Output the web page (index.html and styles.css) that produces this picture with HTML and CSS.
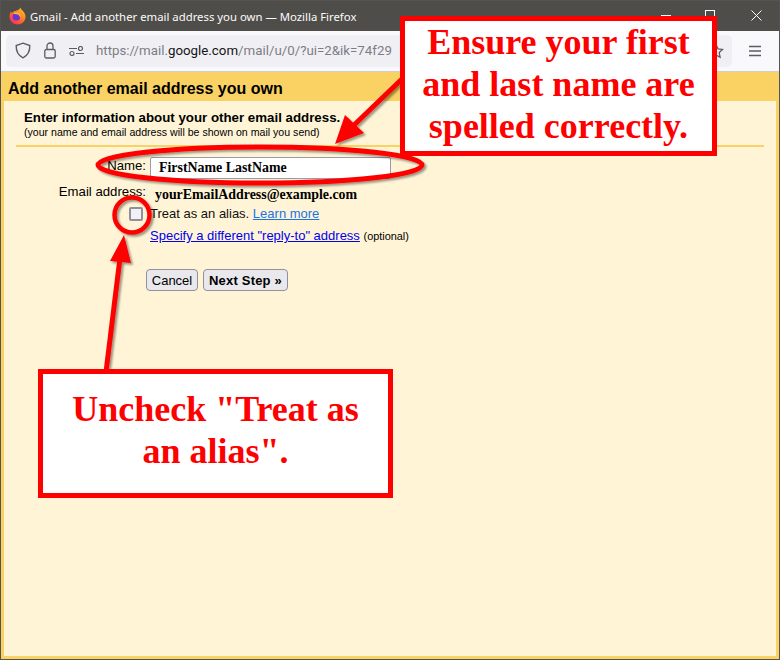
FILE: index.html
```html
<!DOCTYPE html>
<html lang="en">
<head>
<meta charset="utf-8">
<title>Gmail - Add another email address you own</title>
<link rel="stylesheet" href="styles.css">
</head>
<body>
<div class="window">
  <header class="titlebar">
    <svg class="fx" width="17" height="18" viewBox="0 0 17 18"><defs><linearGradient id="g" x1=".9" y1=".1" x2=".2" y2="1"><stop offset="0" stop-color="#ffc21f"/><stop offset=".55" stop-color="#ff6a2b"/><stop offset="1" stop-color="#f0286e"/></linearGradient></defs><path d="M11.500.5c.3 1.800 1.600 2.600 3 4.200 1.500 1.700 2.100 3.700 2 5.300-.2 4.300-3.600 7.500-8 7.500-4.500 0-8-3.500-8-8 0-1.800.5-3.600 1.500-5l.8 1.600c.7-1 1.900-1.800 3.200-2.100 2.200-.5 4.500-1 5.500-3.500z" fill="url(#g)"/><circle cx="7.500" cy="9.500" r="3.900" fill="#6a34cf"/><path d="M4 6.500c1.800-1.500 5-1.700 6.700.1 1.400 1.500 1.500 3.800.4 5.400.3-2.300-1-4.300-3.300-4.700-1.400-.3-2.800-.2-3.800-.8z" fill="#ffb52a"/></svg>
    <span class="wintitle">Gmail - Add another email address you own — Mozilla Firefox</span>
    <div class="winbtns">
      <span class="wmin"></span>
      <span class="wmax"></span>
      <svg width="11" height="11" viewBox="0 0 11 11"><path d="M.5.500l10 10M10.500.500l-10 10" stroke="#fff" fill="none"/></svg>
    </div>
  </header>
  <nav class="toolbar">
    <div class="urlbar">
      <svg width="16" height="17" viewBox="0 0 16 17"><path d="M8 1.200l6.800 2.300c.2 5.500-1.800 9.800-6.800 12.300C3 13.300 1 9 1.200 3.500z" fill="none" stroke="#5b5b66" stroke-width="1.400"/></svg>
      <svg width="12" height="17" viewBox="0 0 12 17"><rect x=".8" y="7.500" width="10.400" height="8.500" rx="1.500" fill="none" stroke="#5b5b66" stroke-width="1.300"/><path d="M3 7.500V4a3 3 0 0 1 6 0v3.500" fill="none" stroke="#5b5b66" stroke-width="1.300"/></svg>
      <svg width="15" height="10" viewBox="0 0 15 10"><path d="M0 2.500h8M7 7.500h8" stroke="#5b5b66" stroke-width="1.200"/><circle cx="11.500" cy="2.500" r="2" fill="none" stroke="#5b5b66" stroke-width="1.200"/><circle cx="3" cy="7.500" r="2" fill="none" stroke="#5b5b66" stroke-width="1.200"/></svg>
      <span class="url">https://mail.<b>google.com</b>/mail/u/0/?ui=2&amp;ik=74f29</span>
      <svg class="star" width="16" height="16" viewBox="0 0 16 16"><path d="M8 1.500l2 4.300 4.600.6-3.400 3.200.9 4.700L8 12l-4.100 2.300.9-4.700L1.400 6.400 6 5.800z" fill="none" stroke="#5b5b66" stroke-width="1.300"/></svg>
    </div>
    <svg class="menu" width="14" height="12" viewBox="0 0 14 12"><path d="M1 1.500h12M1 6h12M1 10.500h12" stroke="#5b5b66" stroke-width="1.300"/></svg>
  </nav>
  <main class="dialog">
    <h1 class="dialog-title">Add another email address you own</h1>
    <section class="panel">
      <div class="intro">
        <div class="intro-head">Enter information about your other email address.</div>
        <div class="intro-sub">(your name and email address will be shown on mail you send)</div>
      </div>
      <form class="form">
        <div class="row row-name">
          <label class="lbl">Name:</label>
          <div class="name-input">FirstName LastName</div>
        </div>
        <div class="row row-email">
          <span class="lbl">Email address:</span>
          <span class="email">yourEmailAddress@example.com</span>
        </div>
        <div class="row row-alias">
          <span class="lbl check-cell"><span class="checkbox"></span></span>
          <span class="alias">Treat as an alias. <a class="learn" href="#">Learn more</a></span>
        </div>
        <div class="row row-reply">
          <span class="lbl"></span>
          <span class="reply"><a href="#">Specify a different "reply-to" address</a> <small>(optional)</small></span>
        </div>
        <div class="actions">
          <button type="button" class="btn">Cancel</button>
          <button type="button" class="btn btn-next">Next Step »</button>
        </div>
      </form>
    </section>
  </main>

  <svg class="marks" width="780" height="660" viewBox="0 0 780 660">
    <defs><filter id="s" x="-10%" y="-10%" width="120%" height="120%"><feDropShadow dx="2" dy="2" stdDeviation="1.200" flood-color="#000" flood-opacity=".4"/></filter></defs>
    <g filter="url(#s)">
      <path d="M403 78L352 127" stroke="#f00" stroke-width="5" fill="none"/>
      <path d="M335 144L345 115L364 133z" fill="#f00"/>
      <ellipse cx="260" cy="165" rx="162" ry="18" fill="none" stroke="#f00" stroke-width="5"/>
      <circle cx="132" cy="215" r="17.500" fill="none" stroke="#f00" stroke-width="4.500"/>
      <path d="M106 372L120 258" stroke="#f00" stroke-width="5" fill="none"/>
      <path d="M124 235L110 261L131 263z" fill="#f00"/>
    </g>
  </svg>
  <aside class="callout callout-a">Ensure your first and last name are spelled correctly.</aside>
  <aside class="callout callout-b">Uncheck "Treat as an alias".</aside>
</div>
</body>
</html>
```
FILE: styles.css
```css
* { box-sizing: border-box; }
html, body { margin: 0; padding: 0; }
body { width: 780px; height: 660px; overflow: hidden; background: #4f4d49; font-family: "Liberation Sans", Arial, sans-serif; }
.window { position: relative; width: 780px; height: 660px; padding: 1px; display: flex; flex-direction: column; background: #55534f; }
.titlebar { height: 30px; flex: none; background: #4f4d49; display: flex; align-items: center; padding-left: 8px; color: #fbfbfb; }
.fx { flex: none; margin-right: 4px; margin-top: -1px; }
.wintitle { white-space: nowrap; font-family: "Noto Sans", "Open Sans", sans-serif; font-size: 11.350px; }
.winbtns { margin-left: auto; display: flex; align-items: center; gap: 35px; padding-right: 17px; margin-top: -2px; }
.wmin { width: 10px; height: 1px; background: #fff; }
.wmax { width: 10px; height: 10px; border: 1px solid #fff; margin-left: -1px; margin-right: 1px; }
.toolbar { height: 41px; flex: none; background: #f9f9fb; border-bottom: 1px solid #cfcfd3; display: flex; align-items: center; padding: 0 23px 1px 5px; gap: 16px; }
.urlbar { width: 726px; height: 32px; flex: none; background: #f0f0f4; border-radius: 5px; display: flex; align-items: center; padding: 0 8px 0 9px; }
.urlbar svg:nth-child(1) { margin-right: 13px; }
.urlbar svg:nth-child(2) { margin-right: 13px; }
.urlbar svg:nth-child(3) { margin-right: 12px; }
.url { font: 13.300px Roboto, "Noto Sans", sans-serif; color: #7d7d85; white-space: nowrap; }
.url b { font-weight: 400; color: #15141a; }
.star { margin-left: auto; }
.menu { flex: none; }
.dialog { flex: 1; display: flex; flex-direction: column; background: #fad163; padding: 0 3px 3px; }
.dialog-title { margin: 0; height: 29px; flex: none; font: bold 16px/33px "Liberation Sans", Arial, sans-serif; color: #000; padding-left: 4px; }
.panel { flex: 1; background: #fff5d6; padding: 0 12px; }
.intro { padding: 9px 0 0 8px; height: 46px; border-bottom: 2px solid #fad163; }
.intro-head { font: bold 13.300px/16px "Liberation Sans", Arial, sans-serif; color: #000; }
.intro-sub { font: 10.600px/12px "Liberation Sans", Arial, sans-serif; color: #000; }
.form { padding-top: 10px; }
.row { display: flex; }
.lbl { width: 130px; flex: none; text-align: right; color: #000; font-size: 13.200px; line-height: 15px; }
.row-name .lbl { padding-top: 1px; }
.name-input { width: 241px; height: 22px; margin-left: 4px; background: #fff; border: 1px solid #9a9aa8; border-radius: 2px; font: bold 13.900px/19px "Liberation Serif", serif; padding-left: 8px; color: #000; }
.row-email { margin-top: 5px; height: 21px; }
.email { margin-left: 9px; font: bold 13.900px/21px "Liberation Serif", serif; color: #000; }
.row-alias { height: 22px; }
.check-cell { display: flex; justify-content: flex-end; padding-top: 2px; }
.checkbox { width: 14px; height: 14px; background: #f2f2f6; border: 2px solid #8f8f9d; border-radius: 2px; margin-right: 3px; }
.alias { margin-left: 4px; font-size: 13px; line-height: 18px; color: #111; }
.learn { color: #1a73e8; }
.row-reply { height: 22px; }
.reply { margin-left: 4px; font-size: 13px; line-height: 18px; white-space: nowrap; }
.reply a { color: #0000ee; }
.reply small { font-size: 10.900px; color: #000; }
.actions { margin: 20px 0 0 130px; display: flex; gap: 5px; }
.btn { height: 22px; width: 52px; padding: 0; background: #e9e9ed; border: 1px solid #8f8f9d; border-radius: 4px; font: 13px "Liberation Sans", Arial, sans-serif; color: #000; }
.btn-next { width: 85px; font-weight: bold; letter-spacing: .2px; }
.marks { position: absolute; left: 0; top: 0; pointer-events: none; }
.callout { position: absolute; background: #fff; border: 5px solid #f00; color: #f00; text-align: center; font-family: "Liberation Serif", serif; font-weight: bold; font-size: 36px; line-height: 42px; }
.callout-a { left: 400px; top: 16px; width: 317px; height: 140px; padding: 0 8px; }
.callout-b { left: 38px; top: 369px; width: 355px; height: 129px; padding: 14px 25px 0; }
```
